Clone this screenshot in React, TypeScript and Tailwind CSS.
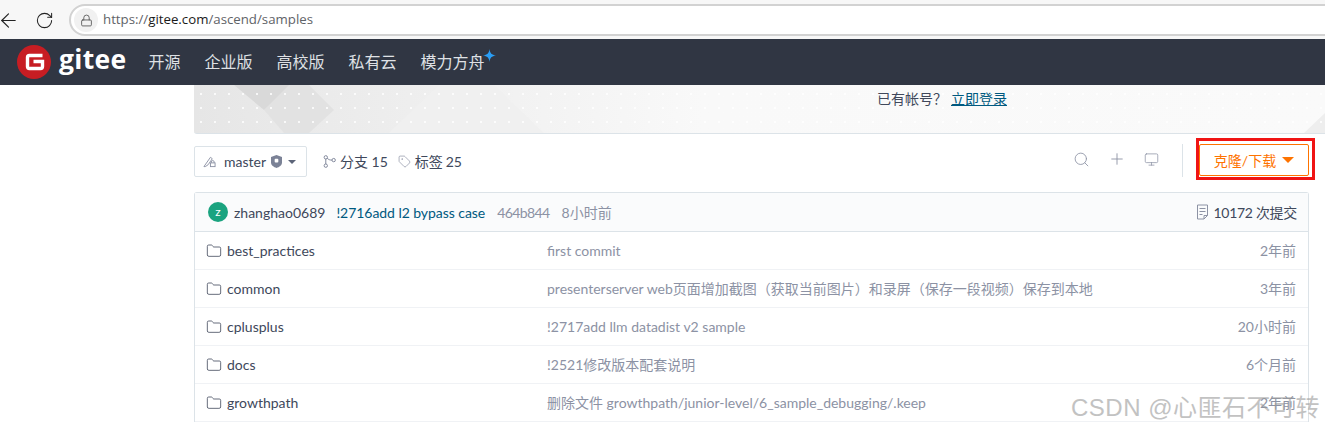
import { ArrowLeft, Folder, Lock, Monitor, Plus, RotateCw, Search, Tag } from 'lucide-react'

const rows = [
  { name: 'best_practices', msg: 'first commit', time: '2年前' },
  { name: 'common', msg: 'presenterserver web页面增加截图（获取当前图片）和录屏（保存一段视频）保存到本地', time: '3年前' },
  { name: 'cplusplus', msg: '!2717add llm datadist v2 sample', time: '20小时前' },
  { name: 'docs', msg: '!2521修改版本配套说明', time: '6个月前' },
  { name: 'growthpath', msg: '删除文件 growthpath/junior-level/6_sample_debugging/.keep', time: '2年前' },
]

const navItems = ['开源', '企业版', '高校版', '私有云', '模力方舟']

function BrowserBar() {
  return (
    <div className="h-[39px] bg-[#f7f7f7] flex items-center pt-[1px]">
      <ArrowLeft className="w-[23px] h-[23px] ml-[-3px] text-[#222]" strokeWidth={1.2} />
      <RotateCw className="w-[19px] h-[19px] ml-[15px] text-[#222]" strokeWidth={1.3} />
      <div className="ml-[15px] flex-1 h-[32px] mr-[-20px] bg-white border-2 border-[#d2d2d2] rounded-l-full flex items-center pl-[3px]">
        <div className="w-[24px] h-[24px] rounded-full bg-[#f1f1f1] flex items-center justify-center">
          <Lock className="w-[13px] h-[13px] text-[#555]" strokeWidth={1.6} />
        </div>
        <span className="ml-[5px] text-[13.25px] font-['Open_Sans',sans-serif] text-[#5f6368]">
          https://<span className="text-[#1a1a1a]">gitee.com</span>/ascend/samples
        </span>
      </div>
    </div>
  )
}

function GiteeLogo() {
  return (
    <svg viewBox="0 0 34 34" className="w-[34px] h-[34px]">
      <circle cx="17" cy="17" r="17" fill="#c71d23" />
      <path
        d="M25.500 10.500H12.500a2 2 0 0 0-2 2v9a2 2 0 0 0 2 2h11a2 2 0 0 0 2-2v-5h-9"
        fill="none"
        stroke="#fff"
        strokeWidth="3.400"
      />
    </svg>
  )
}

function NavBar() {
  return (
    <div className="h-[46px] bg-[#303643] flex items-center pl-[17px]">
      <GiteeLogo />
      <span className="ml-[8px] mt-[-6px] text-[26.500px] leading-none font-bold tracking-[0.3px] text-white font-['Open_Sans',sans-serif]">
        gitee
      </span>
      <div className="ml-[22px] flex gap-[24px] text-[16px] text-[#dfe1e5]">
        {navItems.map((item) => (
          <span key={item}>{item}</span>
        ))}
      </div>
      <svg viewBox="0 0 12 12" className="w-[13px] h-[13px] mt-[-13px] ml-[-1px]">
        <path d="M6 0C6.500 4 8 5.500 12 6 8 6.500 6.500 8 6 12 5.500 8 4 6.500 0 6 4 5.500 5.500 4 6 0Z" fill="#2a9df4" />
      </svg>
    </div>
  )
}

function Banner() {
  return (
    <div className="relative h-[49px] overflow-hidden rounded-bl-[3px] border-b border-[#dce3e8] bg-gradient-to-r from-[#e6e6e6] via-[#f9f9f9] via-45% to-[#fafafa]">
      <svg className="absolute inset-0 w-full h-full" viewBox="0 0 1131 48" preserveAspectRatio="none">
        <path d="M40 0 L70 25 L100 0Z" fill="#d9d9d9" />
        <path d="M70 25 L95 0 L115 0 L140 25 L115 48 L90 48Z" fill="#e2e2e2" />
        <path d="M195 48 L245 0 L300 0 L350 48Z" fill="#f0f0f0" />
        <path d="M1110 48 L1131 28 L1131 48Z" fill="#eeeeee" />
      </svg>
      <div className="absolute inset-0 bg-[radial-gradient(circle,#ffffff_1.2px,transparent_1.5px)] bg-[length:14px_14px] bg-[position:0px_2px] opacity-80" />
      <div className="relative flex pl-[683px] pt-[4px] text-[14px] leading-[20px] text-[#40485b]">
        <span>已有帐号？</span>
        <span className="ml-[4px] text-[#005980] underline underline-offset-1 decoration-[#005980]">立即登录</span>
      </div>
    </div>
  )
}

function BranchIcon({ className }: { className: string }) {
  return (
    <svg viewBox="0 0 14 14" className={className} fill="none" stroke="#7b8296" strokeWidth="1">
      <circle cx="3" cy="2.500" r="1.800" />
      <circle cx="3" cy="11.500" r="1.800" />
      <circle cx="11.500" cy="5.500" r="1.800" />
      <path d="M3 4.300v5.400M4.500 3.500C6 5 7.500 5.500 9.700 5.500" />
    </svg>
  )
}

function Toolbar() {
  return (
    <div className="relative h-[58px] flex items-center">
      <div className="h-[31px] w-[113px] mt-[-3px] border border-[#dce3e8] rounded-[2px] flex items-center pl-[8px] text-[14px] text-[#40485b]">
        <svg viewBox="0 0 14 14" className="w-[13px] h-[13px]" fill="none" stroke="#8c92a4" strokeWidth="1">
          <path d="M1 12.500L8 2.500l2 1.500-4.500 6.500-3 2z" />
          <rect x="8" y="8.500" width="5" height="4" />
          <path d="M9 8.500V7.500a1.500 1.500 0 0 1 3 0v1" />
        </svg>
        <span className="ml-[8px]">master</span>
        <svg viewBox="0 0 12 14" className="w-[11px] h-[13px] ml-[5px]">
          <path d="M6 0l6 2v6c0 3-3 5-6 6-3-1-6-3-6-6V2z" fill="#7b8296" />
          <rect x="4" y="4" width="4" height="4" rx="1" fill="#fff" />
        </svg>
        <svg viewBox="0 0 8 4" className="w-[8px] h-[4px] ml-[6px]">
          <path d="M0 0h8L4 4z" fill="#5c6478" />
        </svg>
      </div>
      <div className="ml-[16px] mt-[-3px] flex items-center text-[14px] text-[#40485b]">
        <BranchIcon className="w-[13px] h-[13px]" />
        <span className="ml-[4px]">分支 15</span>
        <Tag className="w-[13px] h-[13px] ml-[10px] text-[#8c92a4]" strokeWidth={1.3} />
        <span className="ml-[4px] tracking-[-0.2px]">标签 25</span>
      </div>
      <div className="ml-auto flex items-center mt-[-6px]">
        <Search className="w-[17px] h-[17px] mt-[-2px] text-[#8c92a4]" strokeWidth={1.2} />
        <Plus className="w-[18px] h-[18px] mt-[-2px] ml-[18px] text-[#8c92a4]" strokeWidth={1.2} />
        <Monitor className="w-[15px] h-[15px] mt-[-2px] ml-[18px] text-[#8c92a4]" strokeWidth={1.2} />
        <div className="w-[1px] h-[33px] bg-[#dce3e8] ml-[23px]" />
        <div className="relative ml-[16px] h-[32px] w-[110px] border border-[#fe7300] rounded-[2px] flex items-center justify-center text-[14px] text-[#fe7300]">
          <span>克隆/下载</span>
          <svg viewBox="0 0 12 6" className="w-[12px] h-[6px] ml-[6px]">
            <path d="M0 0h12L6 6z" fill="#fe7300" />
          </svg>
          <div className="absolute left-[-4px] top-[-7px] w-[119px] h-[42px] border-[3px] border-[#f01414]" />
        </div>
      </div>
    </div>
  )
}

function FileTable() {
  return (
    <div className="border border-[#dce3e8] border-b-0 rounded-t-[3px] text-[14px]">
      <div className="h-[39px] bg-[#fafbfc] border-b border-[#dce3e8] flex items-center pl-[13px] pr-[11px]">
        <div className="w-[20px] h-[20px] rounded-full bg-[#1aa37f] text-white text-[12px] flex items-center justify-center">
          z
        </div>
        <span className="ml-[6px] text-[#40485b]">zhanghao0689</span>
        <span className="ml-[11px] tracking-[-0.05px] text-[#005980]">!2716add l2 bypass case</span>
        <span className="ml-[12px] tracking-[-0.6px] text-[#8c92a4]">464b844</span>
        <span className="ml-[12px] text-[#8c92a4]">8小时前</span>
        <svg viewBox="0 0 13 16" className="ml-auto w-[13px] h-[16px]" fill="none" stroke="#8c92a4" strokeWidth="1">
          <path d="M8 15H1.500V1h10v10.500M8 15l3.500-3.500H8zM3.500 4.500h6M3.500 7.500h6M3.500 10.500h3" />
        </svg>
        <span className="ml-[5px] tracking-[-0.3px] text-[#40485b]">10172 次提交</span>
      </div>
      {rows.map((row) => (
        <div key={row.name} className="h-[38px] border-b border-[#f0f2f5] flex items-center pl-[12px] pr-[12px]">
          <Folder className="w-[16px] h-[16px] ml-[-1px] text-[#40485b]" strokeWidth={1.2} />
          <span className="ml-[5px] w-[320px] text-[#40485b]">{row.name}</span>
          <span className="text-[#8c92a4]">{row.msg}</span>
          <span className="ml-auto text-[#8c92a4]">{row.time}</span>
        </div>
      ))}
    </div>
  )
}

export default function App() {
  return (
    <div className="relative h-[430px] overflow-hidden bg-white font-['Lato','Noto_Sans_CJK_SC',sans-serif]">
      <BrowserBar />
      <NavBar />
      <div className="ml-[194px]">
        <Banner />
        <div className="w-[1115px]">
          <Toolbar />
          <FileTable />
        </div>
      </div>
      <div className="absolute left-[1071px] top-[392px] text-[24px] leading-[32px] tracking-[0.5px] text-[#9a9a9a] opacity-60 whitespace-nowrap font-['Liberation_Sans','Noto_Sans_CJK_SC',sans-serif]">
        CSDN @心匪石不可转
      </div>
    </div>
  )
}
